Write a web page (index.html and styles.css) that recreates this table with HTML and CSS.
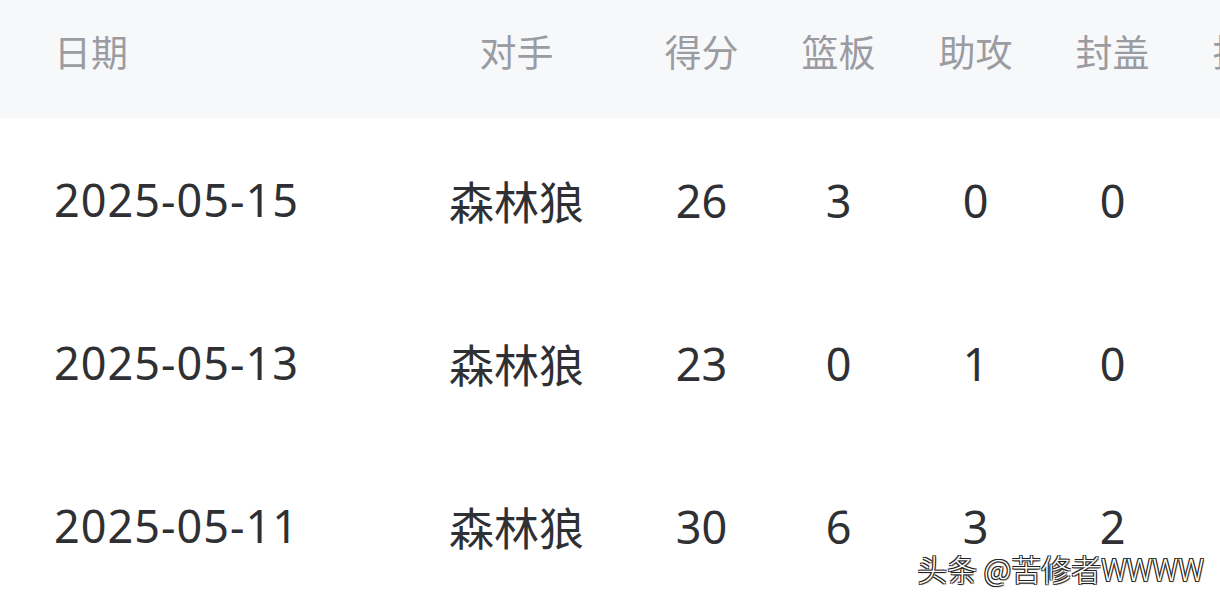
FILE: index.html
```html
<!DOCTYPE html>
<html lang="zh-CN">
<head>
  <meta charset="UTF-8" />
  <meta name="viewport" content="width=device-width, initial-scale=1.0"/>
  <title>比赛数据</title>
  <link rel="stylesheet" href="styles.css">
</head>
<body>
  <div id="stats">
    <div class="row head">
      <div class="cell date">日期</div>
      <div class="cell">对手</div>
      <div class="cell">得分</div>
      <div class="cell">篮板</div>
      <div class="cell">助攻</div>
      <div class="cell">封盖</div>
      <div class="cell">抢断</div>
    </div>
    <div class="row">
      <div class="cell date">2025-05-15</div>
      <div class="cell">森林狼</div>
      <div class="cell">26</div>
      <div class="cell">3</div>
      <div class="cell">0</div>
      <div class="cell">0</div>
      <div class="cell"></div>
    </div>
    <div class="row">
      <div class="cell date">2025-05-13</div>
      <div class="cell">森林狼</div>
      <div class="cell">23</div>
      <div class="cell">0</div>
      <div class="cell">1</div>
      <div class="cell">0</div>
      <div class="cell"></div>
    </div>
    <div class="row">
      <div class="cell date">2025-05-11</div>
      <div class="cell">森林狼</div>
      <div class="cell">30</div>
      <div class="cell">6</div>
      <div class="cell">3</div>
      <div class="cell">2</div>
      <div class="cell"></div>
    </div>
  </div>

  <div id="watermark">头条 @苦修者WWWW</div>
</body>
</html>
```

FILE: styles.css
```css
* {
  box-sizing: border-box;
  margin: 0;
  padding: 0;
}

body {
  font-family: "Noto Sans", "Noto Sans CJK SC", sans-serif;
  background: #fff;
  color: #2f3033;
  width: 1220px;
  height: 604px;
  overflow: hidden;
  position: relative;
}

#stats {
  width: 1320px;
}

.row {
  display: grid;
  grid-template-columns: 346px 233px 137px 137px 137px 137px 137px;
  align-items: center;
  padding-left: 54px;
  height: 163px;
  font-size: 45px;
}

.row.head {
  height: 118px;
  padding-bottom: 16px;
  margin-bottom: 1px;
  background: #f7f8fa;
  color: #9a9ca1;
  font-size: 37px;
}

.cell {
  text-align: center;
  white-space: nowrap;
}

.cell.date {
  text-align: left;
}

.row:not(.head) .cell.date {
  letter-spacing: 1px;
  transform: translateY(-1px);
}

#watermark {
  position: absolute;
  right: 16px;
  bottom: 14px;
  font-family: "Noto Sans CJK SC", sans-serif;
  font-weight: 300;
  font-size: 30px;
  color: #fff;
  text-shadow: -1px -1px 0 #222, 1px 1px 1px #222, -1px 1px 0 #222, 1px -1px 0 #222;
}
```
